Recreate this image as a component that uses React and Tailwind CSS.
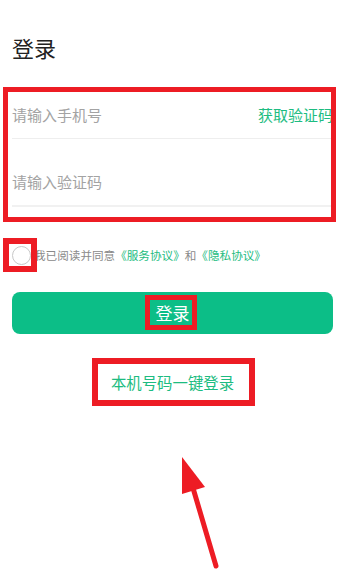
const FONT = { fontFamily: '"Noto Sans CJK SC", "Noto Sans", sans-serif' }

function Annotation({ className }) {
  return <div className={`absolute border-[#ed1c24] pointer-events-none ${className}`} />
}

export default function App() {
  return (
    <div className="relative w-[345px] h-[574px] bg-white overflow-hidden" style={FONT}>
      <div className="px-[12px]">
        <h1 className="pt-[32px] text-[22px] leading-[30px] text-[#222] font-normal">登录</h1>

        <div className="mt-[31px]">
          <div className="h-[46px] flex items-center justify-between border-b border-[#eeeeee]">
            <span className="text-[15px] text-[#a3a3a3]">请输入手机号</span>
            <span className="text-[15px] text-[#1dbc81]">获取验证码</span>
          </div>
          <div className="h-[68px] pt-[20px] flex items-center border-b-2 border-[#f1f1f1]">
            <span className="text-[15px] text-[#a3a3a3]">请输入验证码</span>
          </div>
        </div>

        <div className="mt-[38px] flex items-center gap-[3px]">
          <div className="w-[19px] h-[19px] rounded-full border border-[#c8c8c8] shrink-0" />
          <p className="text-[11.6px] leading-[20px] text-[#8a8a8a] whitespace-nowrap">
            我已阅读并同意<span className="text-[#1dbc81]">《服务协议》</span>和<span className="text-[#1dbc81]">《隐私协议》</span>
          </p>
        </div>

        <button className="mt-[27px] w-full h-[42px] rounded-[8px] bg-[#0cbe87] text-white text-[17px] flex items-center justify-center">
          登录
        </button>

        <div className="mt-[38px] text-center text-[15.4px] leading-[20px] text-[#1dbc81]">本机号码一键登录</div>
      </div>

      <Annotation className="left-[3px] top-[87px] w-[333px] h-[135px] border-[5px]" />
      <Annotation className="left-[3px] top-[238px] w-[34px] h-[34px] border-[6px]" />
      <Annotation className="left-[145px] top-[295px] w-[52px] h-[35px] border-[5px]" />
      <Annotation className="left-[92px] top-[358px] w-[163px] h-[48px] border-[6px]" />

      <svg className="absolute left-0 top-0 pointer-events-none" width="345" height="574">
        <line x1="193" y1="488" x2="216" y2="566" stroke="#ed1c24" strokeWidth="5" strokeLinecap="round" />
        <polygon points="182,457 182,494 205,487" fill="#ed1c24" />
      </svg>
    </div>
  )
}
